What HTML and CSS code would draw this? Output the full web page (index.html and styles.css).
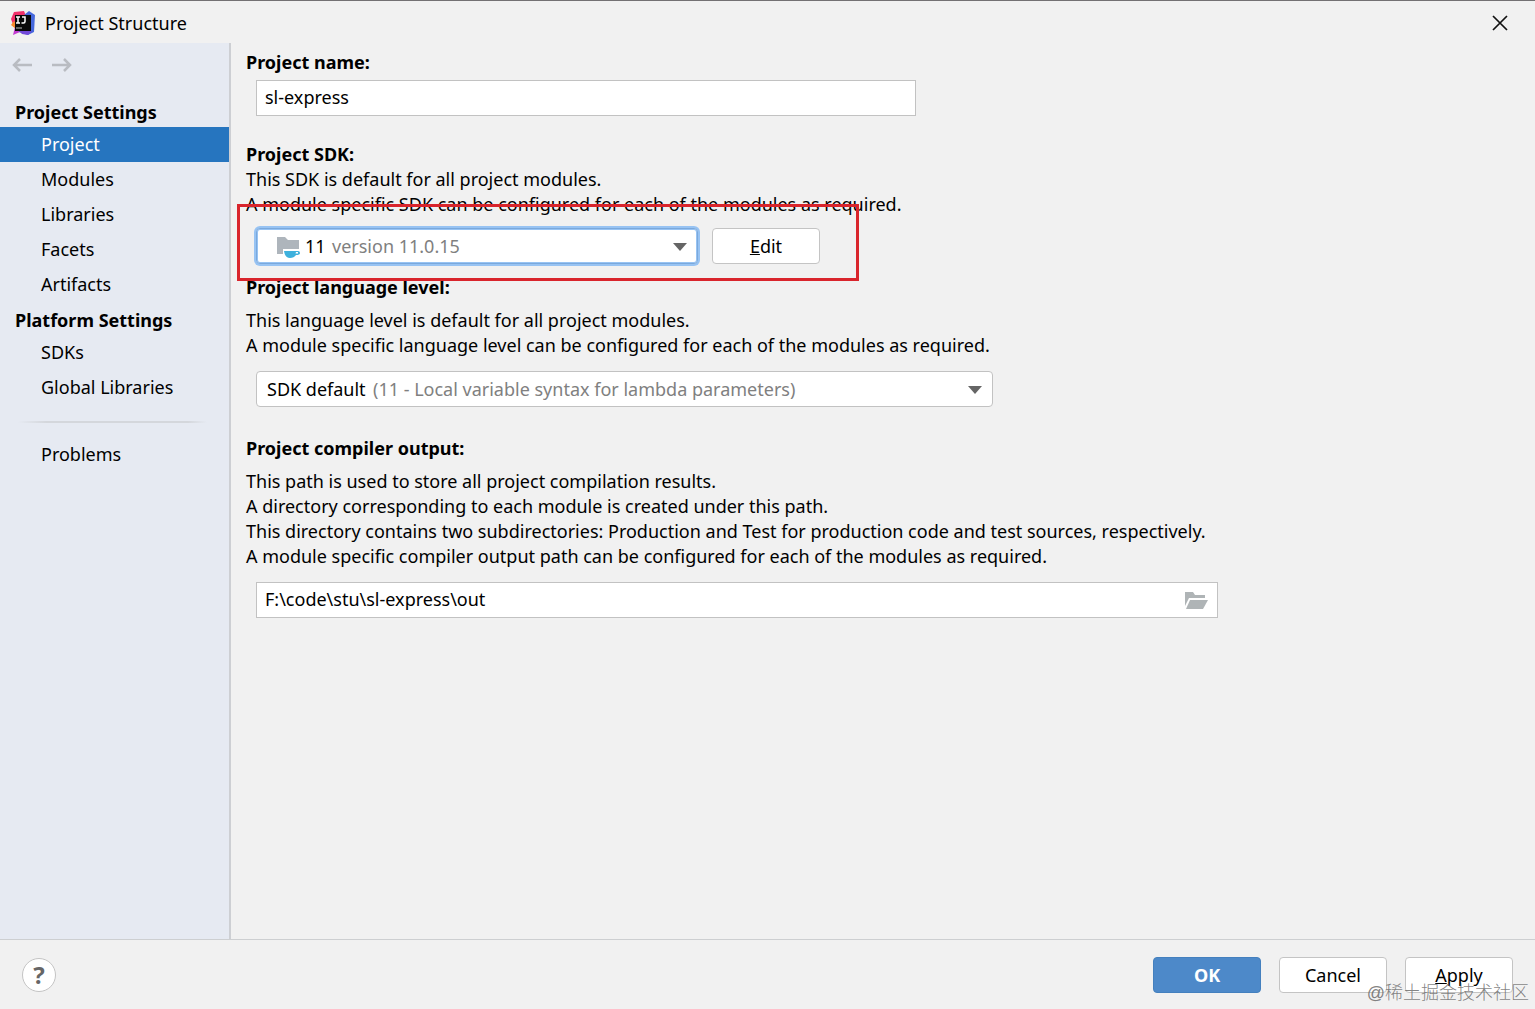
FILE: index.html
```html
<!DOCTYPE html>
<html lang="en">
<head>
    <meta charset="UTF-8">
    <meta name="viewport" content="width=device-width, initial-scale=1.0">
    <title>Project Structure</title>
    <link rel="stylesheet" href="styles.css">
</head>
<body>
    <header class="titlebar">
        <svg class="app-icon" width="24" height="24" viewBox="0 0 24 24" aria-hidden="true">
            <path d="M3 1L13 0L15 5L10 16L3 16L0 8Z" fill="#f0306a"/>
            <path d="M0 14L3 10L7 15L5 18Z" fill="#f98a2c"/>
            <path d="M4 16L10 17L9 21L2 24Z" fill="#c13bd0"/>
            <path d="M13 4L18 0L24 4L23 21L17 24L8 21Z" fill="#4668dc"/>
            <path d="M8 20L21 20L17 24L11 23Z" fill="#7249d8"/>
            <rect x="4" y="4" width="16" height="16" fill="#0a0a0a"/>
            <path d="M5 6h4M7 6v6M5 12h4M11 6h3v4.500q0 1.500-1.500 1.500H10.500" fill="none" stroke="#fff" stroke-width="1.500"/>
            <path d="M5 17h6" stroke="#bbb" stroke-width="1"/>
        </svg>
        <h1>Project Structure</h1>
        <button class="close" aria-label="Close">
            <svg width="16" height="16" viewBox="0 0 16 16"><path d="M1 1L15 15M15 1L1 15" stroke="#111" stroke-width="1.7"/></svg>
        </button>
    </header>

    <div class="content">
        <!-- Sidebar -->
        <nav class="sidebar">
            <div class="history">
                <button aria-label="Back" disabled>
                    <svg width="20" height="16" viewBox="0 0 20 16"><path d="M20 8H2M8 2L2 8L8 14" fill="none" stroke="#b9bcc2" stroke-width="2.500"/></svg>
                </button>
                <button aria-label="Forward" disabled>
                    <svg width="20" height="16" viewBox="0 0 20 16"><path d="M0 8H18M12 2L18 8L12 14" fill="none" stroke="#b9bcc2" stroke-width="2.500"/></svg>
                </button>
            </div>
            <h2>Project Settings</h2>
            <a href="#project" class="active">Project</a>
            <a href="#modules">Modules</a>
            <a href="#libraries">Libraries</a>
            <a href="#facets">Facets</a>
            <a href="#artifacts">Artifacts</a>
            <h2>Platform Settings</h2>
            <a href="#sdks">SDKs</a>
            <a href="#global-libraries">Global Libraries</a>
            <hr>
            <a href="#problems">Problems</a>
        </nav>

        <!-- Project page -->
        <main class="page">
            <section class="name-section">
                <label for="project-name">Project name:</label>
                <input class="field name-field" type="text" id="project-name" value="sl-express">
            </section>

            <section class="sdk-section">
                <label for="project-sdk">Project SDK:</label>
                <p>This SDK is default for all project modules.<br>
                A module specific SDK can be configured for each of the modules as required.</p>
                <div class="sdk-row">
                    <div class="combo sdk-combo">
                        <select id="project-sdk">
                            <option>11</option>
                        </select>
                        <svg class="sdk-icon" width="24" height="22" viewBox="0 0 24 22" aria-hidden="true">
                            <path d="M0 0H8L11 3H22V12H6V17H0Z" fill="#aeb5bc"/>
                            <path d="M7 14H21Q23 14 23 16Q23 18 19 18Q17 21 13 21Q8 21 7 14Z" fill="#3eb1dd"/>
                            <path d="M19 15h2v1.500h-2.500Z" fill="#fff"/>
                        </svg>
                        <span class="hint">version 11.0.15</span>
                        <svg class="arrow" width="14" height="8" viewBox="0 0 14 8" aria-hidden="true"><path d="M0 0H14L7 8Z" fill="#656565"/></svg>
                    </div>
                    <button class="btn"><u>E</u>dit</button>
                    <span class="highlight"></span>
                </div>
            </section>

            <section class="level-section">
                <label for="language-level">Project language level:</label>
                <p>This language level is default for all project modules.<br>
                A module specific language level can be configured for each of the modules as required.</p>
                <div class="combo level-combo">
                    <select id="language-level">
                        <option>SDK default</option>
                    </select>
                    <span class="hint">(11 - Local variable syntax for lambda parameters)</span>
                    <svg class="arrow" width="14" height="8" viewBox="0 0 14 8" aria-hidden="true"><path d="M0 0H14L7 8Z" fill="#656565"/></svg>
                </div>
            </section>

            <section class="output-section">
                <label for="compiler-output">Project compiler output:</label>
                <p>This path is used to store all project compilation results.<br>
                A directory corresponding to each module is created under this path.<br>
                This directory contains two subdirectories: Production and Test for production code and test sources, respectively.<br>
                A module specific compiler output path can be configured for each of the modules as required.</p>
                <div class="field path-field">
                    <input type="text" id="compiler-output" value="F:\code\stu\sl-express\out">
                    <button aria-label="Browse">
                        <svg width="24" height="17" viewBox="0 0 24 17"><path d="M0 0H8L10 3H20V6H4L0 14Z" fill="#afb4b6"/><path d="M5 8H23L18 17H1Z" fill="#afb4b6"/></svg>
                    </button>
                </div>
            </section>
        </main>
    </div>

    <footer class="footer">
        <button class="help" aria-label="Help">?</button>
        <button class="btn primary">OK</button>
        <button class="btn">Cancel</button>
        <button class="btn"><u>A</u>pply</button>
        <span class="watermark">@稀土掘金技术社区</span>
    </footer>
</body>
</html>
```

FILE: styles.css
```css
* {
    box-sizing: border-box;
}
body {
    margin: 0;
    min-height: 100vh;
    display: flex;
    flex-direction: column;
    background-color: #f1f1f1;
    color: #000;
    font-family: "Noto Sans", "Open Sans", sans-serif;
    font-size: 18px;
}
button, input, select {
    font: inherit;
    color: inherit;
}
button {
    padding: 0;
    border: none;
    background: none;
}
svg {
    display: block;
}

/* Title bar */
.titlebar {
    display: flex;
    align-items: center;
    height: 43px;
    padding: 2px 27px 0 11px;
    border-top: 1px solid #737173;
}
.titlebar h1 {
    flex: 1;
    margin: 0 0 0 10px;
    font-size: 18px;
    font-weight: normal;
}

.content {
    flex: 1;
    display: flex;
}

/* Sidebar */
.sidebar {
    flex: none;
    width: 231px;
    background-color: #e6eaf2;
    border-right: 2px solid #cdcfd3;
}
.history {
    display: flex;
    gap: 20px;
    padding: 14px 12px 21px;
}
.sidebar h2 {
    margin: 0;
    padding: 3px 0 0 15px;
    font-size: 18px;
    line-height: 30px;
}
.sidebar a {
    display: block;
    padding-left: 41px;
    line-height: 35px;
    color: #000;
    text-decoration: none;
}
.sidebar a.active {
    background-color: #2675bf;
    color: #fff;
}
.sidebar hr {
    height: 2px;
    margin: 16px 22px 14px 18px;
    border: none;
    background: linear-gradient(to right, transparent, #d4d7dc 15%, #d4d7dc 90%, transparent);
}

/* Project page */
.page {
    flex: 1;
    padding: 6px 15px;
}
.page label {
    display: block;
    font-weight: bold;
    line-height: 26px;
}
.page p {
    margin: 0;
    line-height: 25px;
}
.field {
    height: 36px;
    margin-left: 10px;
    border: 1px solid #c2c2c2;
    background-color: #fff;
}
.name-section {
    margin-bottom: 25px;
}
.name-field {
    display: block;
    width: 100%;
    max-width: 660px;
    margin-top: 5px;
    padding: 0 8px 2px;
}
.combo {
    position: relative;
    height: 36px;
}
.combo select {
    appearance: none;
    width: 100%;
    height: 100%;
    padding: 0 10px;
    border: 1px solid #c2c2c2;
    border-radius: 4px;
    background-color: #fff;
}
.combo .hint, .combo .arrow, .combo .sdk-icon {
    position: absolute;
    pointer-events: none;
}
.combo .hint {
    top: 0;
    line-height: 36px;
    color: #808080;
}
.combo .arrow {
    top: 15px;
    right: 11px;
}
.sdk-section {
    margin-bottom: 10px;
}
.sdk-row {
    position: relative;
    display: flex;
    gap: 14px;
    margin: 11px 0 0 10px;
}
.sdk-combo {
    flex: 0 1 442px;
}
.sdk-combo select {
    padding-left: 48px;
    border-color: #7ba9dc;
    box-shadow: 0 0 0 2px #97c3f3, inset 0 0 0 1px #97c3f3;
}
.sdk-combo .sdk-icon {
    top: 9px;
    left: 21px;
}
.sdk-combo .hint {
    left: 76px;
}
.highlight {
    position: absolute;
    top: -24px;
    left: -19px;
    width: 622px;
    height: 77px;
    border: 3px solid #d9252c;
    pointer-events: none;
}
.level-section {
    margin-bottom: 28px;
}
.level-section p, .output-section p {
    margin: 8px 0 13px;
}
.level-combo {
    max-width: 737px;
    margin-left: 10px;
}
.level-combo .hint {
    left: 117px;
}
.path-field {
    display: flex;
    align-items: center;
    max-width: 962px;
    padding: 0 8px;
}
.path-field input {
    flex: 1;
    min-width: 0;
    padding: 0 0 2px;
    border: none;
    outline: none;
}

/* Footer */
.btn {
    width: 108px;
    height: 36px;
    border: 1px solid #c4c4c4;
    border-radius: 4px;
    background-color: #fff;
}
.btn.primary {
    border-color: #4480be;
    background-color: #4d89c9;
    color: #fff;
    font-weight: bold;
}
.footer {
    position: relative;
    display: flex;
    align-items: center;
    gap: 18px;
    height: 70px;
    padding: 0 22px;
    border-top: 1px solid #cdcfd1;
}
.help {
    width: 34px;
    height: 34px;
    margin-right: auto;
    border: 1px solid #c4c4c4;
    border-radius: 50%;
    background-color: #fff;
    color: #666;
    font-size: 24px;
    font-weight: bold;
    line-height: 32px;
}
.watermark {
    position: absolute;
    right: 6px;
    bottom: 5px;
    color: rgba(100, 100, 100, 0.8);
    font-family: "Liberation Sans", "Noto Sans CJK SC", sans-serif;
    font-size: 18px;
    font-weight: 300;
    pointer-events: none;
}
```
